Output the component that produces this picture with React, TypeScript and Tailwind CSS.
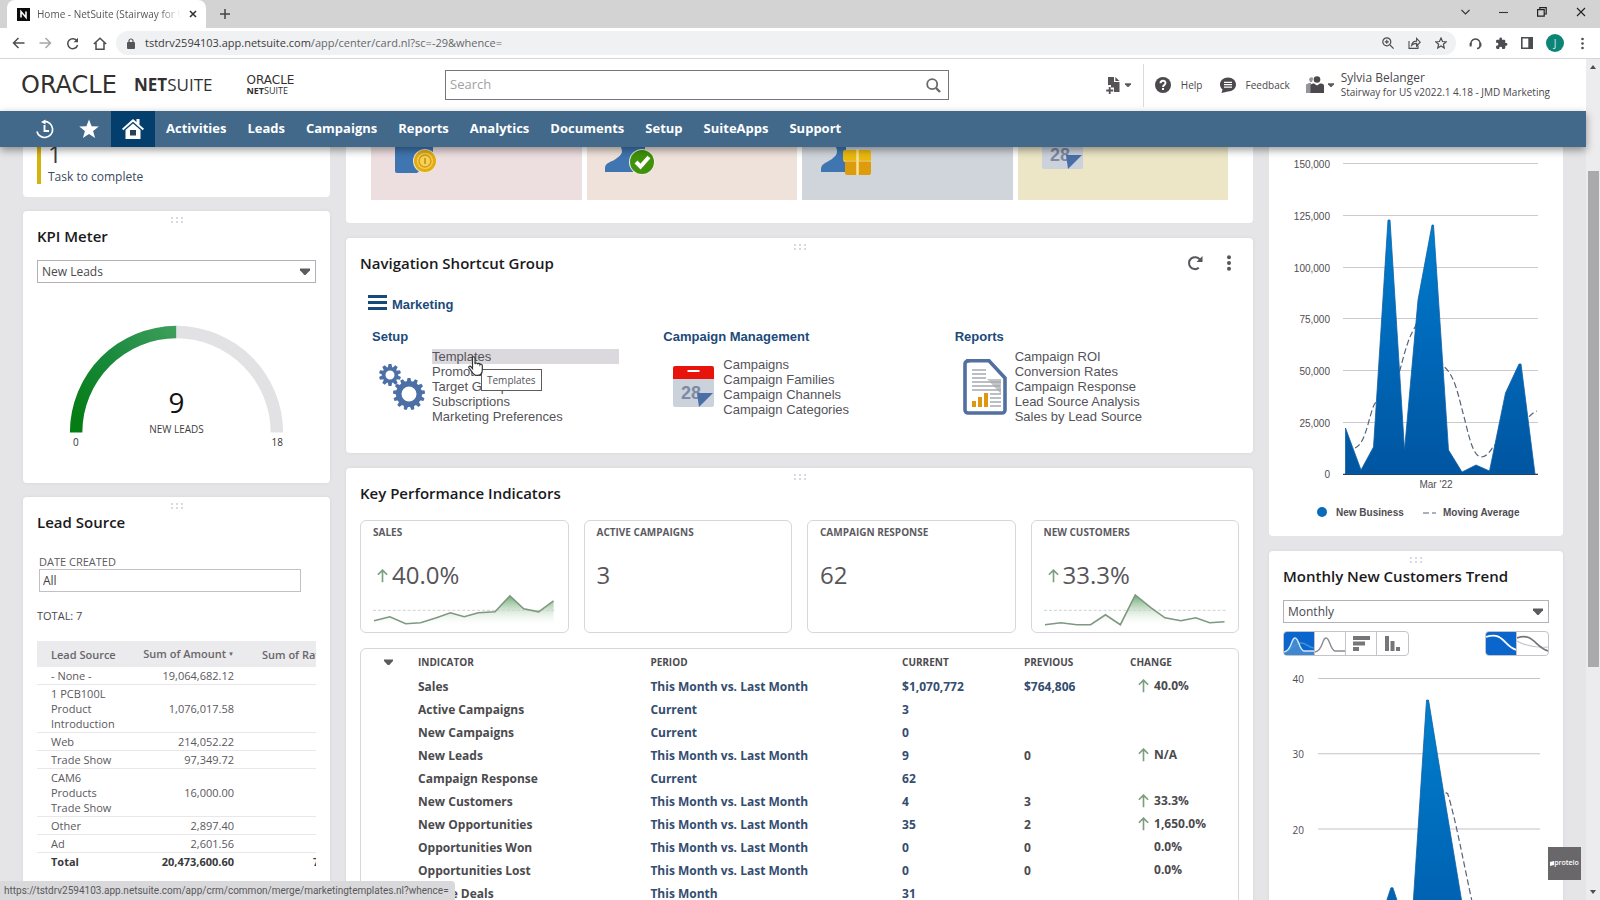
import type { ReactNode } from "react";

const openSans = "font-['Open_Sans',sans-serif]";
const arial = "font-['Liberation_Sans',Arial,sans-serif]";

/* ---------- small shared pieces ---------- */

function DragDots() {
  return (
    <svg className="absolute left-1/2 top-[6px] -translate-x-1/2" width="14" height="7" fill="#dbd9de" aria-hidden="true">
      {[0, 5, 10].map((x) => (
        <g key={x}>
          <rect x={x + 1} y="0" width="2" height="2" />
          <rect x={x + 1} y="4" width="2" height="2" />
        </g>
      ))}
    </svg>
  );
}

function Card({ title, className = "", actions, children }: { title: string; className?: string; actions?: ReactNode; children: ReactNode }) {
  return (
    <section className={"relative rounded bg-white px-3.5 pt-3.5 shadow-[0_0_4px_rgba(0,0,0,0.06)] " + className}>
      <DragDots />
      <div className="flex items-center justify-between">
        <h2 className="text-[15px] leading-[22px] font-semibold text-[#1a191c]">{title}</h2>
        {actions}
      </div>
      {children}
    </section>
  );
}

function Caret({ className = "", size = 10 }: { className?: string; size?: number }) {
  return (
    <svg className={className} width={size} height={size * 0.7} viewBox="0 0 10 7" fill="#5c5a5e" aria-hidden="true">
      <path d="M0 0.6h10v1.6L5.6 7H4.4L0 2.2z" />
    </svg>
  );
}

function SelectBox({ label, value }: { label: string; value: string }) {
  return (
    <div className="relative mt-[13px]">
      <select aria-label={label} defaultValue={value} className="block h-[23px] w-full appearance-none border border-[#b3b1b6] bg-white px-1 text-[12px] leading-[18px] font-medium text-[#4a484c]">
        <option>{value}</option>
      </select>
      <Caret className="pointer-events-none absolute right-1.5 top-2" />
    </div>
  );
}

function UpArrow({ size = 12 }: { size?: number }) {
  return (
    <svg width={size} height={size * 1.2} viewBox="0 0 10 12" fill="none" stroke="#7d9e7f" strokeWidth="1.5" aria-hidden="true">
      <path d="M5 12V1M0.8 5.2 5 1l4.2 4.2" />
    </svg>
  );
}

/* ---------- browser chrome ---------- */

function TabStrip() {
  return (
    <div className="flex h-7 shrink-0 items-end bg-[#d3d3d3] pl-[7px]">
      <div className="flex h-7 w-[199px] items-center rounded-t-lg bg-white pl-2.5 pr-[9px]">
        <svg width="13" height="13" viewBox="0 0 13 13" aria-hidden="true">
          <rect width="13" height="13" fill="#0c0c0c" />
          <path d="M4 9.6V3.6L9 9.4V3.4" fill="none" stroke="#fff" strokeWidth="1.6" />
        </svg>
        <span className="ml-[7px] flex-1 overflow-hidden whitespace-nowrap text-[10px] text-[#55565a] [mask-image:linear-gradient(to_right,black_85%,transparent)]">Home - NetSuite (Stairway for US</span>
        <button aria-label="Close tab" className="ml-2">
          <svg width="8" height="8" stroke="#333" strokeWidth="1.6"><path d="M1 1l6 6M7 1 1 7" /></svg>
        </button>
      </div>
      <button aria-label="New tab" className="mb-[9px] ml-3.5">
        <svg width="10" height="10" stroke="#444" strokeWidth="1.5"><path d="M5 0v10M0 5h10" /></svg>
      </button>
      <div className="ml-auto flex h-6 items-center gap-[29px] self-start pr-3.5">
        <button aria-label="Search tabs"><svg width="9" height="6" fill="none" stroke="#333" strokeWidth="1.1"><path d="M.5 1 4.5 5l4-4" /></svg></button>
        <button aria-label="Minimize"><svg width="9" height="9" stroke="#333" strokeWidth="1.1"><path d="M0 4.5h9" /></svg></button>
        <button aria-label="Restore"><svg width="10" height="10" fill="none" stroke="#222" strokeWidth="1.2"><path d="M.6 2.6h6.6v6.6H.6zM2.8 2.4V.6h6.4V7H7.4" /></svg></button>
        <button aria-label="Close"><svg width="10" height="10" stroke="#222" strokeWidth="1.1"><path d="M1 1l8 8M9 1 1 9" /></svg></button>
      </div>
    </div>
  );
}

function Toolbar() {
  const ic = { fill: "none", stroke: "#4c4d50", strokeWidth: 1.5 } as const;
  return (
    <div className="flex h-[31px] shrink-0 items-center border-b border-[#d4d6d8] bg-white pl-3 pr-4">
      <div className="flex items-center gap-3.5">
        <button aria-label="Back"><svg width="13" height="12" {...ic}><path d="M12.5 6H1.5M6.5 1 1.5 6l5 5" /></svg></button>
        <button aria-label="Forward"><svg width="13" height="12" {...ic} stroke="#a6a7aa"><path d="M.5 6h11M6.5 1l5 5-5 5" /></svg></button>
        <button aria-label="Reload"><svg width="13" height="13" {...ic}><path d="M11 4A5 5 0 1 0 11.6 8" /><path d="M12 .8v4.4H7.6z" fill="#4c4d50" stroke="none" /></svg></button>
        <button aria-label="Home page"><svg width="14" height="13" {...ic}><path d="M.8 7 7 1.2 13.2 7M3 5.6v6.6h8V5.6" /></svg></button>
      </div>
      <div className="ml-[9px] flex h-6 flex-1 items-center rounded-full bg-[#f0f1f2] pl-[11px] pr-[9px]">
        <svg width="8" height="11" viewBox="0 0 8 11" aria-hidden="true"><rect y="4" width="8" height="7" rx="1" fill="#55565a" /><path d="M2 4.5V3a2 2 0 0 1 4 0v1.500" fill="none" stroke="#55565a" strokeWidth="1.2" /></svg>
        <span className="ml-2.5 flex-1 text-[11px] text-[#66676b]"><span className="text-[#3a3b3e]">tstdrv2594103.app.netsuite.com</span>/app/center/card.nl?sc=-29&amp;whence=</span>
        <div className="flex items-center gap-[14px]">
          <button aria-label="Zoom"><svg width="12" height="12" {...ic} strokeWidth="1.2"><circle cx="4.8" cy="4.800" r="4" /><path d="M8 8l3.600 3.600M4.800 2.800v4M2.800 4.800h4" /></svg></button>
          <button aria-label="Share"><svg width="13" height="12" {...ic} strokeWidth="1.1"><path d="M1 4v7.400h9V8.500M3.600 8.500c.4-3 2-4.400 5-4.400V1.400l3.600 3.800L8.600 9V6.400c-2.200 0-3.700.6-5 2.100z" /></svg></button>
          <button aria-label="Bookmark"><svg width="12" height="12" viewBox="0 0 24 24" {...ic} strokeWidth="2.400"><path d="M12 2l3 7 7.500.6-5.700 5 1.700 7.400L12 18l-6.500 4 1.700-7.400-5.700-5L9 9z" /></svg></button>
        </div>
      </div>
      <div className="ml-[13px] flex items-center gap-[13px]">
        <button aria-label="Headset extension"><svg width="13" height="13" {...ic}><path d="M2 8A4.700 4.700 0 1 1 11 8M8 11.600c2 0 3-1.300 3-3" /><path d="M1.600 6v3.600M11.400 6v3.600" strokeWidth="2" /></svg></button>
        <button aria-label="Extensions"><svg width="13" height="13" viewBox="0 0 24 24" fill="#4c4d50"><path d="M20.500 11H19V7a2 2 0 0 0-2-2h-4V3.500a2.500 2.500 0 0 0-5 0V5H4a2 2 0 0 0-2 2v3.800h1.500a2.700 2.700 0 0 1 0 5.400H2V20a2 2 0 0 0 2 2h3.800v-1.500a2.700 2.700 0 0 1 5.400 0V22H17a2 2 0 0 0 2-2v-4h1.500a2.500 2.500 0 0 0 0-5z" /></svg></button>
        <button aria-label="Side panel"><svg width="12" height="12" fill="none" stroke="#4c4d50" strokeWidth="1.600"><path d="M.8.8h10.400v10.400H.8z" /><path d="M9.300 1v10" strokeWidth="4" /></svg></button>
        <button aria-label="Profile" className="flex size-[18px] items-center justify-center rounded-full bg-[#0c8577] text-[10px] text-[#cdebe6]">J</button>
        <button aria-label="Browser menu" className="ml-1"><svg width="3" height="13" fill="#4c4d50"><circle cx="1.500" cy="2" r="1.300" /><circle cx="1.500" cy="6.500" r="1.300" /><circle cx="1.500" cy="11" r="1.300" /></svg></button>
      </div>
    </div>
  );
}

/* ---------- application header ---------- */

function AppHeader() {
  return (
    <header className="grid h-[52px] shrink-0 grid-cols-[minmax(0,445fr)_minmax(0,504fr)_minmax(0,637fr)] items-center bg-white">
      <div className="flex items-center pl-[21px] text-[#33312f]">
        <div className="flex items-center">
          <span className="w-[113px] font-['DejaVu_Sans',sans-serif] text-[24px] leading-[22px]">ORACLE</span>
          <span className="text-[17px] leading-[22px]"><b>NET</b>SUITE</span>
        </div>
        <div className="ml-[34px]">
          <div className="font-['DejaVu_Sans',sans-serif] text-[12px] leading-[10px]">ORACLE</div>
          <div className="text-[9px] leading-[11px]"><b>NET</b>SUITE</div>
        </div>
      </div>
      <label className="flex h-[30px] items-center border border-[#77757a] bg-white pl-1 pr-[7px]">
        <input type="text" aria-label="Search" placeholder="Search" className="min-w-0 flex-1 bg-transparent text-[13px] outline-none placeholder:text-[#a3a1a5]" />
        <svg width="15" height="15" fill="none" stroke="#6a686c" strokeWidth="1.800" aria-hidden="true"><circle cx="6.200" cy="6.200" r="5" /><path d="M10 10l4 4" strokeWidth="2.400" /></svg>
      </label>
      <div className="flex items-center justify-end pr-9 text-[10px] text-[#4a484c]">
        <button aria-label="Create new" className="flex items-center gap-1">
          <svg width="15" height="17" viewBox="0 0 15 17" fill="#555357"><path d="M2 0h6v5h5.500v10H8v-4.500H5V8H2z" /><path d="M9.300 0l4.200 4H9.300z" /><path d="M3.700 10v7M.2 13.500h7" stroke="#555357" strokeWidth="1.800" /></svg>
          <Caret size={6} />
        </button>
        <span className="ml-3 h-[43px] w-px bg-[#dcdadf]" />
        <a href="#help" className="ml-[11px] flex items-center gap-2.5">
          <svg width="16" height="16" viewBox="0 0 16 16"><circle cx="8" cy="8" r="8" fill="#4b494d" /><path d="M5.500 6.300C5.500 3 10.500 3 10.500 6.100 10.500 8 8 8 8 10" fill="none" stroke="#fff" strokeWidth="1.900" /><rect x="7" y="11" width="2" height="2" fill="#fff" /></svg>
          Help
        </a>
        <a href="#feedback" className="ml-[17px] flex items-center gap-2.5">
          <svg width="16" height="16" viewBox="0 0 16 16"><path d="M8 .5c4.500 0 8 3 8 7s-3.500 7-8 7L1.500 16l1-3.500C1 11.200 0 9.500 0 7.500c0-4 3.500-7 8-7z" fill="#4b494d" /><path d="M4 5.300h8M4 7.700h8M4 10.100h8" stroke="#fff" strokeWidth="1.200" /></svg>
          Feedback
        </a>
        <button aria-label="Change role" className="ml-[15px] flex items-center gap-1">
          <svg width="19" height="18" viewBox="0 0 19 18"><path d="M1 17V8.500L4 7h2v10zM4 3.500C4 1 8.500 0 8 3L7 6H5z" fill="#97959a" /><circle cx="12" cy="3.500" r="3.300" fill="#4b494d" /><path d="M5.500 17V9.500c0-1.500 2-2 3.500-2l3 2 3-2c2 0 4 .5 4 2V17z" fill="#4b494d" /></svg>
          <Caret size={6} />
        </button>
        <div className="ml-[7px] whitespace-nowrap">
          <div className="text-[12px] leading-[15px]">Sylvia Belanger</div>
          <div className="leading-[15px]">Stairway for US v2022.1 4.18 - JMD Marketing</div>
        </div>
      </div>
    </header>
  );
}

const navItems = ["Activities", "Leads", "Campaigns", "Reports", "Analytics", "Documents", "Setup", "SuiteApps", "Support"];

function NavBar() {
  return (
    <nav className="relative z-10 flex h-9 shrink-0 items-stretch bg-[#42688a] pl-[23px] shadow-[0_3px_8px_rgba(0,0,0,0.4)]">
      <a href="#recent" aria-label="Recent records" className="flex w-11 items-center justify-center">
        <svg width="20" height="20" viewBox="0 0 20 20" fill="none" stroke="#fff" strokeWidth="1.700"><path d="M9 2.500a8 8 0 1 1-7.300 9" strokeDasharray="36 3" /><path d="M6 3 10.500.500v5z" fill="#fff" stroke="none" /><path d="M9.500 6v6H14" strokeWidth="1.900" /></svg>
      </a>
      <a href="#shortcuts" aria-label="Shortcuts" className="flex w-11 items-center justify-center">
        <svg width="20" height="20" viewBox="0 0 20 20" fill="#fff"><path d="M10 .500l2.600 6.700 7.200.3-5.700 4.500 2 7L10 15l-6.100 4 2-7L.2 7.500l7.200-.3z" /></svg>
      </a>
      <a href="#home" aria-label="Home" className="flex w-11 items-center justify-center bg-[#043e6d]">
        <svg width="22" height="20" viewBox="0 0 22 20"><path d="M14.500 0h3v6l-3-2.500zM0 9.800 11 0l11 9.800-1.300 1.500L11 2.800 1.300 11.300z" fill="#fff" /><path d="M11 4.500 18.500 11v9h-15v-9z" fill="#fff" /><rect x="8" y="11" width="6" height="5.500" fill="#2a4256" /></svg>
      </a>
      {navItems.map((n) => (
        <a key={n} href={"#" + n.toLowerCase()} className="flex items-center pb-px pl-[11px] pr-2.5 text-[13px] font-bold text-white">{n}</a>
      ))}
    </nav>
  );
}

/* ---------- left column ---------- */

function Gauge() {
  return (
    <svg viewBox="0 0 280 200" className="block w-full" role="img" aria-label="New leads gauge">
      <defs>
        <linearGradient id="gauge" x1="0" y1="1" x2="1" y2="0">
          <stop offset="0.1" stopColor="#057d14" />
          <stop offset="0.55" stopColor="#1a8a3e" />
          <stop offset="1" stopColor="#3f9f5c" />
        </linearGradient>
      </defs>
      <path d="M33 150A107 107 0 0 1 140 43V55.500A94.500 94.500 0 0 0 45.500 150z" fill="url(#gauge)" />
      <path d="M140 43A107 107 0 0 1 247 150H234.500A94.500 94.500 0 0 0 140 55.500z" fill="#e2e1e4" />
      <g textAnchor="middle">
        <text x="140" y="130" fontSize="28" fill="#111">9</text>
        <text x="140" y="151" fontSize="10" fill="#3e3c40">NEW LEADS</text>
        <text x="39" y="164" fontSize="10" fill="#333">0</text>
        <text x="241" y="164" fontSize="10" fill="#333">18</text>
      </g>
    </svg>
  );
}

const leadRows: [string, string][] = [
  ["- None -", "19,064,682.12"],
  ["1 PCB100L Product Introduction", "1,076,017.58"],
  ["Web", "214,052.22"],
  ["Trade Show", "97,349.72"],
  ["CAM6 Products Trade Show", "16,000.00"],
  ["Other", "2,897.40"],
  ["Ad", "2,601.56"],
];

function LeftColumn() {
  return (
    <div className="flex min-w-0 flex-col gap-3.5">
      <section className="flex h-[50px] shrink-0 flex-col justify-end overflow-hidden rounded-b bg-white px-3.5 pb-[13px]">
        <a href="#tasks" className="border-l-4 border-[#d6b20c] pl-[7px]">
          <span className="block text-[24px] leading-[30px] text-[#3e3c40]">1</span>
          <span className="block text-[12px] leading-[15px] font-medium text-[#3a4a60]">Task to complete</span>
        </a>
      </section>
      <Card title="KPI Meter" className="h-[272px] shrink-0">
        <SelectBox label="KPI" value="New Leads" />
        <Gauge />
      </Card>
      <Card title="Lead Source" className="flex-1">
        <div className="mt-[22px] pl-0.5 pr-[15px]">
          <label htmlFor="created" className="block text-[11px] leading-[14px] text-[#5d5b60]">DATE CREATED</label>
          <input id="created" defaultValue="All" className="block h-[23px] w-full border border-[#c4bfc5] px-[3px] text-[12px] font-medium text-[#3e3c40]" />
        </div>
        <p className="mt-4 text-[11px] leading-[15px] text-[#4a484c]">TOTAL: 7</p>
        <div className="mt-[18px] overflow-hidden">
          <table className="w-[360px] table-fixed border-collapse text-[11px] leading-[15px] text-[#5a585d]">
            <colgroup><col className="w-[86px]" /><col className="w-[113px]" /><col /></colgroup>
            <thead>
              <tr className="h-[26px] bg-[#ebeaec] text-[#68666b]">
                <th className="whitespace-nowrap pl-3.5 text-left font-semibold">Lead Source</th>
                <th className="whitespace-nowrap pr-0.5 text-right font-semibold">Sum of Amount<span className="pl-0.5 text-[6px] align-[2px]">▼</span></th>
                <th className="whitespace-nowrap pl-[26px] text-left font-semibold">Sum of Rate</th>
              </tr>
            </thead>
            <tbody>
              {leadRows.map(([name, amount]) => (
                <tr key={name} className="border-b border-[#e9e7ea]">
                  <td className="py-px pl-3.5">{name}</td>
                  <td className="py-px pr-0.5 text-right">{amount}</td>
                  <td />
                </tr>
              ))}
              <tr className="font-bold text-[#3b393d]">
                <td className="py-px pl-3.5">Total</td>
                <td className="py-px pr-0.5 text-right">20,473,600.60</td>
                <td className="py-px pl-[77px]">7</td>
              </tr>
            </tbody>
          </table>
        </div>
      </Card>
    </div>
  );
}

/* ---------- middle column ---------- */

function CalendarCorner() {
  return (
    <>
      <rect x="0" y="8" width="41" height="33" rx="2" fill="#ccd2dc" />
      <text x="8" y="33" fontSize="18" fontWeight="700" fill="#7c8aa3" className={arial}>28</text>
      <path d="M24 27h16L26 41z" fill="#4a6fa5" />
    </>
  );
}

const tiles: { name: string; bg: string; icon: ReactNode }[] = [
  {
    name: "Billing customers", bg: "bg-[#eddee0]",
    icon: (<><path d="M0 0h38v12L22 26H2a2 2 0 0 1-2-2z" fill="#3f75b0" /><circle cx="30" cy="14" r="12" fill="#f2e6c8" /><circle cx="30" cy="14" r="11" fill="#e3ab14" /><circle cx="30" cy="14" r="8" fill="#f4d258" /><circle cx="30" cy="14" r="6" fill="none" stroke="#d59c10" strokeWidth="1.500" /><path d="M30 11v6" stroke="#c38a08" strokeWidth="1.500" /></>),
  },
  {
    name: "Approved customers", bg: "bg-[#efe2da]",
    icon: (<><path d="M10 0h24v25H-6v-4c0-6 8-6 12-10 5-4 6-5 4-11z" fill="#3f75b0" /><circle cx="31" cy="15" r="13" fill="#f3ede2" /><circle cx="31" cy="15" r="12" fill="#3f9209" /><path d="M25 15l4.500 4.500L38 10" fill="none" stroke="#fff" strokeWidth="4" /></>),
  },
  {
    name: "Promotions", bg: "bg-[#d0d5dc]",
    icon: (<><path d="M10 0h10v25H-5v-3c0-6 8-7 12-11 4-3 5-6 3-11z" fill="#3f75b0" /><rect x="17" y="3" width="28" height="12" rx="2" fill="#eab90f" /><rect x="19" y="13" width="26" height="15" rx="2" fill="#dc9c0c" /><path d="M31.500 2v26" stroke="#f7e39a" strokeWidth="2.500" /><path d="M18 14h27" stroke="#f2d880" strokeWidth="1" /></>),
  },
  { name: "Calendar", bg: "bg-[#ece6c6]", icon: <g transform="translate(0,-19)"><CalendarCorner /></g> },
];

function Gear({ cx, cy, r, hole, teeth }: { cx: number; cy: number; r: number; hole: number; teeth: number }) {
  return (
    <g transform={"translate(" + cx + "," + cy + ")"} fill="#4c70a6">
      {Array.from({ length: teeth }, (_, i) => (
        <path key={i} d={"M-2.200 " + -(r - 1) + "L-1.500 " + -(r + 3) + "h3L2.200 " + -(r - 1) + "z"} transform={"rotate(" + (i * 360) / teeth + ")"} />
      ))}
      <circle r={(r + hole) / 2} fill="none" stroke="#4c70a6" strokeWidth={r - hole} />
    </g>
  );
}

const gearsIcon = (
  <svg width="48" height="48" viewBox="0 0 48 48" aria-hidden="true">
    <Gear cx={12} cy={12} r={8} hole={4.500} teeth={10} />
    <Gear cx={31} cy={31} r={13} hole={7.500} teeth={13} />
  </svg>
);

const calendarIcon = (
  <svg width="41" height="41" viewBox="0 0 41 41" aria-hidden="true">
    <CalendarCorner />
    <path d="M2 0h37a2 2 0 0 1 2 2v11H0V2a2 2 0 0 1 2-2z" fill="#e8140c" />
    <path d="M14.500 5h12" stroke="#fff" strokeWidth="2" />
  </svg>
);

const reportIcon = (
  <svg width="44" height="56" viewBox="0 0 44 56" aria-hidden="true">
    <path d="M5 1.800h21L42 19v32a3 3 0 0 1-3 3H5a3 3 0 0 1-3-3V5a3 3 0 0 1 3-3z" fill="#fff" stroke="#52709f" strokeWidth="3.600" />
    <path d="M24 20h14v15z" fill="#c4c5c5" />
    <path d="M9 11h14M9 15h14M9 19h14M9 23h29M9 27h28M9 31h29M27 35h11M27 39h11M27 43h11M27 47h11" stroke="#a7a9b3" strokeWidth="1.600" />
    <path d="M9 42h4v6H9zM15 38h4v10h-4zM21 34h4v14h-4z" fill="#e0960f" />
  </svg>
);

const groups = [
  { title: "Setup", icon: gearsIcon, links: ["Templates", "Promotions", "Target Group", "Subscriptions", "Marketing Preferences"] },
  { title: "Campaign Management", icon: calendarIcon, links: ["Campaigns", "Campaign Families", "Campaign Channels", "Campaign Categories"] },
  { title: "Reports", icon: reportIcon, links: ["Campaign ROI", "Conversion Rates", "Campaign Response", "Lead Source Analysis", "Sales by Lead Source"] },
];

function ShortcutCard() {
  return (
    <Card
      title="Navigation Shortcut Group"
      className="h-[215px] shrink-0"
      actions={
        <div className="flex items-center gap-6 pr-2">
          <button aria-label="Refresh"><svg width="16" height="16" viewBox="0 0 16 16" fill="none" stroke="#57555a" strokeWidth="2"><path d="M11.800 12.800A6 6 0 1 1 12.800 4.500" /><path d="M15.500 1v6H9.500z" fill="#57555a" stroke="none" /></svg></button>
          <button aria-label="More"><svg width="4" height="16" fill="#57555a"><circle cx="2" cy="2.200" r="2" /><circle cx="2" cy="8" r="2" /><circle cx="2" cy="13.800" r="2" /></svg></button>
        </div>
      }
    >
      <div className={"mt-[23px] pl-2 text-[13px] leading-[15px] " + arial}>
        <h3 className="flex items-center gap-[5px] font-bold text-[#1b4a7b]">
          <svg width="19" height="15" stroke="#144a7c" strokeWidth="3" className="-mt-1" aria-hidden="true"><path d="M0 1.500h19M0 7.500h19M0 13.500h19" /></svg>
          Marketing
        </h3>
        <div className="mt-[17px] grid grid-cols-[minmax(0,291fr)_minmax(0,291fr)_minmax(0,284fr)] pl-1">
          {groups.map((g, gi) => (
            <div key={g.title}>
              <h4 className="font-bold text-[#1b4a7b]">{g.title}</h4>
              <div className="mt-[5px] flex h-[75px] items-center">
                <span className="flex w-[60px] shrink-0 items-center justify-center">{g.icon}</span>
                <ul className="min-w-0 flex-1 pr-11 text-[#545359]">
                  {g.links.map((l, li) => (
                    <li key={l} className={gi === 0 && li === 0 ? "relative bg-[#dbd9de]" : ""}>
                      <a href="#link" className="block whitespace-nowrap">{l}</a>
                      {gi === 0 && li === 0 && (
                        <>
                          <span className={"absolute left-[49px] top-5 z-10 border border-[#5d5b60] bg-white px-[5px] py-[2px] text-[10px] leading-[16px] " + openSans}>Templates</span>
                          <svg className="absolute left-[36px] top-[7px] z-20" width="16" height="20" viewBox="0 0 16 20" fill="#fff" stroke="#333" strokeWidth="1.200" aria-hidden="true"><path d="M4.500 12.500V2c0-1.700 2.500-1.700 2.500 0v6c.3-1.400 2.400-1.300 2.500.2.500-1.200 2.400-1 2.500.5.600-1 2.300-.6 2.300.9V14c0 3.500-2 5.400-5 5.400-3.400 0-4.300-1.700-5.500-3.800L.9 11.800c-.7-1.400 1.200-2.300 2.200-1z" /></svg>
                        </>
                      )}
                    </li>
                  ))}
                </ul>
              </div>
            </div>
          ))}
        </div>
      </div>
    </Card>
  );
}

function Sparkline({ id, points }: { id: string; points: [number, number][] }) {
  const line = points.map((p) => p.join(",")).join(" ");
  return (
    <svg viewBox="0 0 184 38" className="block w-full" aria-hidden="true">
      <defs>
        <linearGradient id={id} gradientUnits="userSpaceOnUse" x1="0" y1="4" x2="0" y2="36">
          <stop offset="0" stopColor="#4f9758" stopOpacity="0.85" />
          <stop offset="0.5" stopColor="#9cc79f" stopOpacity="0.4" />
          <stop offset="1" stopColor="#fff" stopOpacity="0" />
        </linearGradient>
      </defs>
      <polygon points={"1,38 " + line + " 182,38"} fill={"url(#" + id + ")"} />
      <path d="M0 19.500h184" stroke="#cdd1ce" strokeWidth="1" strokeDasharray="3 2" />
      <polyline points={line} fill="none" stroke="#7f9880" strokeWidth="1.600" />
    </svg>
  );
}

const salesPts: [number, number][] = [[1, 30], [17, 26], [33, 33], [48, 32], [64, 27], [78, 22], [92, 26], [106, 22], [123, 21], [138, 5], [152, 18], [167, 21], [182, 10]];
const custPts: [number, number][] = [[1, 34], [17, 32], [33, 34], [47, 34], [62, 24], [77, 34], [92, 4], [108, 17], [122, 27], [138, 30], [153, 27], [167, 32], [182, 31]];

const kpis: { label: string; value: string; pts?: [number, number][] }[] = [
  { label: "SALES", value: "40.0%", pts: salesPts },
  { label: "ACTIVE CAMPAIGNS", value: "3" },
  { label: "CAMPAIGN RESPONSE", value: "62" },
  { label: "NEW CUSTOMERS", value: "33.3%", pts: custPts },
];

const vs = "This Month vs. Last Month";
const indicators: [string, string, string, string, string, boolean][] = [
  ["Sales", vs, "$1,070,772", "$764,806", "40.0%", true],
  ["Active Campaigns", "Current", "3", "", "", false],
  ["New Campaigns", "Current", "0", "", "", false],
  ["New Leads", vs, "9", "0", "N/A", true],
  ["Campaign Response", "Current", "62", "", "", false],
  ["New Customers", vs, "4", "3", "33.3%", true],
  ["New Opportunities", vs, "35", "2", "1,650.0%", true],
  ["Opportunities Won", vs, "0", "0", "0.0%", false],
  ["Opportunities Lost", vs, "0", "0", "0.0%", false],
  ["Online Deals", "This Month", "31", "", "", false],
];

function KpiCard() {
  return (
    <Card title="Key Performance Indicators" className="flex-1">
      <div className="mt-4 grid grid-cols-4 gap-[15px]">
        {kpis.map((k) => (
          <div key={k.label} className="flex h-[113px] flex-col rounded-md border border-[#d9d5dd] px-3 pt-1">
            <h3 className="text-[10px] leading-[15px] font-bold text-[#5c5a5f]">{k.label}</h3>
            <p className="mt-[19px] flex items-center text-[24px] leading-[32px] text-[#57555a]">
              {k.pts && <span className="mr-1 pl-1 pt-0.5"><UpArrow size={11} /></span>}
              {k.value}
            </p>
            {k.pts && <Sparkline id={"spark-" + k.label[0]} points={k.pts} />}
          </div>
        ))}
      </div>
      <div className="mt-[15px] rounded-t-md border border-[#d9d5dd]">
        <table className="w-full table-fixed text-left text-[12px] text-[#4b4a4e]">
          <colgroup><col className="w-[6.5%]" /><col className="w-[26.5%]" /><col className="w-[28.7%]" /><col className="w-[13.9%]" /><col className="w-[12.1%]" /><col /></colgroup>
          <thead>
            <tr className="h-[26px] text-[10px] text-[#4d4b50]">
              <th className="pl-[23px]"><button aria-label="Collapse" className="block"><Caret size={9} /></button></th>
              <th>INDICATOR</th>
              <th>PERIOD</th>
              <th>CURRENT</th>
              <th>PREVIOUS</th>
              <th>CHANGE</th>
            </tr>
          </thead>
          <tbody>
            {indicators.map(([name, period, cur, prev, change, up]) => (
              <tr key={name} className="h-[23px] font-bold">
                <td />
                <td>{name}</td>
                <td><a href="#period" className="text-[#344d70]">{period}</a></td>
                <td><a href="#current" className="text-[#344d70]">{cur}</a></td>
                <td className={prev.startsWith("$") ? "text-[#344d70]" : ""}>{prev}</td>
                <td><span className="flex items-center pb-px pl-2"><span className="w-[16px]">{up && <UpArrow size={11} />}</span>{change}</span></td>
              </tr>
            ))}
          </tbody>
        </table>
      </div>
    </Card>
  );
}

function MiddleColumn() {
  return (
    <div className="flex min-w-0 flex-col gap-[15px]">
      <section className="h-[76px] shrink-0 rounded-b bg-white px-[25px] pb-[23px]">
        <div className="grid h-full grid-cols-4 gap-[5px]">
          {tiles.map((t) => (
            <button key={t.name} aria-label={t.name} className={"overflow-hidden pl-6 " + t.bg}>
              <svg width="60" height="53" viewBox="0 0 60 53" className="block overflow-visible">{t.icon}</svg>
            </button>
          ))}
        </div>
      </section>
      <ShortcutCard />
      <KpiCard />
    </div>
  );
}

/* ---------- right column ---------- */

const yTicks: [string, number][] = [["150,000", 17], ["125,000", 69], ["100,000", 121], ["75,000", 172], ["50,000", 224], ["25,000", 276], ["0", 327]];

function BusinessChart() {
  return (
    <svg viewBox="0 0 294 389" className={"block w-full text-[10px] " + arial} fill="#4f4d52" role="img" aria-label="New business trend">
      <defs>
        <linearGradient id="area" gradientUnits="userSpaceOnUse" x1="0" y1="60" x2="0" y2="327">
          <stop offset="0" stopColor="#0080d0" />
          <stop offset="0.5" stopColor="#0069ba" />
          <stop offset="1" stopColor="#0055a0" />
        </linearGradient>
      </defs>
      {yTicks.map(([label, y]) => (
        <g key={label}>
          <path d={"M74 " + (y - 0.5) + "h195"} stroke="#cccacf" />
          <text x="61" y={y + 4} textAnchor="end">{label}</text>
        </g>
      ))}
      <path d="M86 301C97 296 99 272 105 258C113 245 122 240 131 223C137 200 140 190 146 180C152 166 160 180 174 219C186 227 190 252 194 266C199 284 203 309 212 310C218 310 221 304 224 300C234 290 248 280 259 271Q264 265 268 264" fill="none" stroke="#57647a" strokeWidth="1.200" strokeDasharray="6 3" />
      <path d="M76.500 327V281L92 323 104.500 300 119 73h2L135.500 303 149 153 163 78h1.500L179.500 303 193 325 207 318 220.500 324 236.500 246 250 217h2L266 327z" fill="url(#area)" stroke="#1160a4" strokeWidth="0.800" />
      <path d="M74 327.500h195" stroke="#23405f" strokeWidth="1.200" />
      <text x="167" y="341" textAnchor="middle">Mar '22</text>
      <circle cx="53" cy="365" r="5" fill="#0a6cb8" />
      <path d="M154 366h6M163 366h4" stroke="#57647a" strokeWidth="1.200" />
      <g fontWeight="700">
        <text x="67" y="369">New Business</text>
        <text x="174" y="369">Moving Average</text>
      </g>
    </svg>
  );
}

function CustomersChart() {
  return (
    <svg viewBox="14 0 265 260" className="block w-full text-[10px]" fill="#4f4d52" role="img" aria-label="Monthly new customers">
      <defs>
        <linearGradient id="area2" gradientUnits="userSpaceOnUse" x1="0" y1="30" x2="0" y2="250">
          <stop offset="0" stopColor="#0080cd" />
          <stop offset="1" stopColor="#005fb0" />
        </linearGradient>
      </defs>
      {[40, 30, 20, 10].map((v, i) => (
        <g key={v}>
          <path d={"M49 " + (10.500 + i * 75) + "h221"} stroke="#c5c1c8" />
          <text x="35" y={15 + i * 75} textAnchor="end">{v}</text>
        </g>
      ))}
      <path d="M168 120Q173 123 178 125C186 150 195 200 205 245" fill="none" stroke="#57647a" strokeWidth="1.200" strokeDasharray="6 3" />
      <path d="M108 260 121.500 219h2L137 260zM142 260 157 32h2L174 124 192 232 197 260z" fill="url(#area2)" stroke="#1160a4" strokeWidth="0.800" />
    </svg>
  );
}

const iconBtn = "flex h-full w-[31px] items-center justify-center border-r border-[#c6c3c8] last:border-r-0";

function RightColumn() {
  return (
    <div className="flex min-w-0 flex-col gap-[15px]">
      <section className="shrink-0 overflow-hidden rounded-b bg-white">
        <BusinessChart />
      </section>
      <Card title="Monthly New Customers Trend" className="flex-1">
        <SelectBox label="Interval" value="Monthly" />
        <div className="mt-2 flex justify-between">
          <div className="flex h-[25px] overflow-hidden rounded border border-[#c6c3c8]">
            <button aria-label="Area chart" className={iconBtn + " bg-[#0a66cc]"}>
              <svg width="31" height="23" fill="none" strokeWidth="1.400"><path d="M0 20c8-1 7-14 11-14s4 12 9 13h11v4H0z" fill="#3f87cf" /><path d="M0 20c5 0 10-9 17-9 6 0 7 5 14 5" stroke="#3f95dc" /><path d="M0 20c8-1 7-14 11-14s4 12 9 13h11" stroke="#d5e6f6" /></svg>
            </button>
            <button aria-label="Line chart" className={iconBtn}>
              <svg width="31" height="23" fill="none" stroke="#8c8a90" strokeWidth="1.400"><path d="M0 20c8-1 7-14 11-14s4 12 9 13h11" /></svg>
            </button>
            <button aria-label="Bar chart" className={iconBtn}>
              <svg width="17" height="15" fill="#77757a"><path d="M0 0h17v4H0zM0 5.500h12v4H0zM0 11h6v4H0z" /></svg>
            </button>
            <button aria-label="Column chart" className={iconBtn}>
              <svg width="15" height="15" fill="#77757a"><path d="M0 0h4v15H0zM5.500 5h4v10h-4zM11 11h4v4h-4z" /></svg>
            </button>
          </div>
          <div className="flex h-[25px] overflow-hidden rounded border border-[#c6c3c8]">
            <button aria-label="Single curve" className={iconBtn + " bg-[#0a66cc]"}>
              <svg width="31" height="23" fill="none" stroke="#fff" strokeWidth="1.800"><path d="M0 5c18-6 18 10 31 13" /></svg>
            </button>
            <button aria-label="Compare curves" className={iconBtn}>
              <svg width="31" height="23" fill="none" strokeWidth="1.800"><path d="M0 9c9 5 19 7 31 6" stroke="#c6c4c9" strokeWidth="1.200" /><path d="M0 6c16-6 18 9 31 13" stroke="#77757a" /></svg>
            </button>
          </div>
        </div>
        <div className="mt-3">
          <CustomersChart />
        </div>
      </Card>
    </div>
  );
}

/* ---------- page ---------- */

export default function App() {
  return (
    <div className={"relative flex h-screen flex-col overflow-hidden bg-white " + openSans}>
      <TabStrip />
      <Toolbar />
      <div className="flex min-h-0 flex-1">
        <div className="flex min-w-0 flex-1 flex-col">
          <AppHeader />
          <NavBar />
          <main className="grid min-h-0 flex-1 grid-cols-[minmax(0,307fr)_minmax(0,907fr)_minmax(0,294fr)] gap-4 overflow-hidden bg-[#e5e4e7] px-[23px]">
            <LeftColumn />
            <MiddleColumn />
            <RightColumn />
          </main>
        </div>
        <div className="flex w-3.5 shrink-0 flex-col items-center justify-between bg-[#ececee] py-1.5" aria-hidden="true">
          <svg width="6" height="4" fill="#4c4d50"><path d="M0 4 3 0l3 4z" /></svg>
          <div className="flex w-[11px] flex-1 flex-col pt-[102px]">
            <div className="h-[69%] bg-[#aaa9ac]" />
          </div>
          <svg width="6" height="4" fill="#4c4d50"><path d="M0 0l3 4 3-4z" /></svg>
        </div>
      </div>
      <div className="absolute bottom-0 left-0 z-20 h-[19px] rounded-tr bg-[#d9d8da] pl-1 pr-1.5 font-['Roboto',sans-serif] text-[10px] leading-[19px] text-[#5a585d]">https://tstdrv2594103.app.netsuite.com/app/crm/common/merge/marketingtemplates.nl?whence=</div>
      <div className="absolute bottom-5 right-[19px] z-20 flex size-[33px] items-center justify-center bg-[#696769] text-[7px] font-semibold text-white">
        <svg width="4" height="5" fill="#fff" aria-hidden="true"><path d="M0 1 4 0v4L0 5z" /></svg>
        protelo
      </div>
    </div>
  );
}
